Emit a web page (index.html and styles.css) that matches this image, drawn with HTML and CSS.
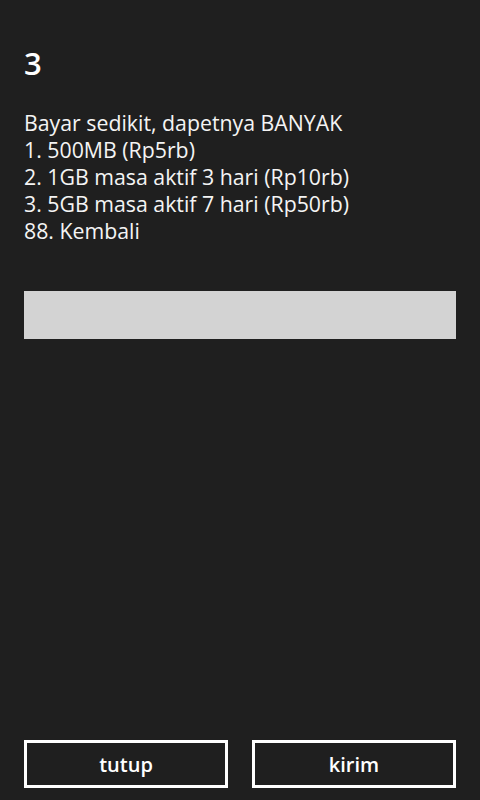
FILE: index.html
```html
<!DOCTYPE html>
<html>
<head>
<meta charset="utf-8">
<link rel="stylesheet" href="styles.css">
</head>
<body>
<div class="screen">
  <div class="title">3</div>
  <div class="message">
    <div>Bayar sedikit, dapetnya BANYAK</div>
    <div>1. 500MB (Rp5rb)</div>
    <div>2. 1GB masa aktif 3 hari (Rp10rb)</div>
    <div>3. 5GB masa aktif 7 hari (Rp50rb)</div>
    <div>88. Kembali</div>
  </div>
  <div class="input"></div>
  <div class="spacer"></div>
  <div class="buttons">
    <div class="btn">tutup</div>
    <div class="btn">kirim</div>
  </div>
</div>
</body>
</html>
```

FILE: styles.css
```css
html, body {
  margin: 0;
  padding: 0;
  background: #1f1f1f;
}
.screen {
  height: 800px;
  box-sizing: border-box;
  padding: 0 24px 12px 24px;
  display: flex;
  flex-direction: column;
  color: #ffffff;
  font-family: "Open Sans", "Noto Sans", sans-serif;
}
.title {
  font-size: 31px;
  font-weight: 600;
  line-height: 40px;
  margin-top: 43px;
}
.message {
  margin-top: 26px;
  font-size: 21.3px;
  line-height: 27px;
  color: #f4f4f4;
}
.input {
  margin-top: 47px;
  height: 48px;
  background: #d3d3d3;
}
.spacer {
  flex: 1;
}
.buttons {
  display: flex;
  gap: 24px;
}
.btn {
  flex: 1;
  height: 48px;
  box-sizing: border-box;
  border: 3px solid #ffffff;
  display: flex;
  align-items: center;
  justify-content: center;
  font-size: 20px;
  font-weight: 600;
}
```
